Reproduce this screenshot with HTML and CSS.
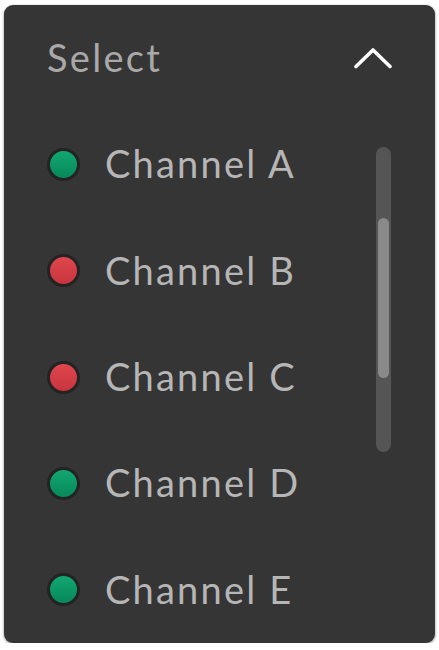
FILE: index.html
```html
<!DOCTYPE html>
<html>
<head>
<meta charset="utf-8">
<link rel="stylesheet" href="styles.css">
</head>
<body>
<div class="panel">
  <div class="header">
    <span class="title">Select</span>
    <svg class="chev" width="38" height="22" viewBox="0 0 38 22"><polyline points="2,19.5 19,3 36,19.5" fill="none" stroke="#ffffff" stroke-width="3.6" stroke-linecap="round" stroke-linejoin="round"/></svg>
  </div>
  <div class="row"><span class="dot green"></span><span class="label">Channel A</span></div>
  <div class="row"><span class="dot red"></span><span class="label">Channel B</span></div>
  <div class="row"><span class="dot red"></span><span class="label">Channel C</span></div>
  <div class="row"><span class="dot green"></span><span class="label">Channel D</span></div>
  <div class="row"><span class="dot green"></span><span class="label">Channel E</span></div>
  <div class="track"><div class="thumb"></div></div>
</div>
</body>
</html>
```
FILE: styles.css
```css
html, body {
  margin: 0;
  padding: 0;
  background: #ffffff;
}
.panel {
  position: relative;
  margin: 5px 0 0 4px;
  width: 431px;
  height: 638px;
  background: #353535;
  border-radius: 9px;
  box-shadow: 0 1px 3px rgba(0,0,0,0.45);
  display: flex;
  flex-direction: column;
  font-family: Lato, "Noto Sans", sans-serif;
}
.header, .row {
  flex: 1;
  display: flex;
  align-items: center;
}
.header {
  justify-content: space-between;
  padding: 0 43px 0 43px;
}
.title {
  color: #a9a9a9;
  font-size: 38px;
  letter-spacing: 2.3px;
  margin-top: -2px;
}
.chev {
  display: block;
}
.row {
  padding-left: 43px;
}
.dot {
  width: 27px;
  height: 27px;
  border-radius: 50%;
  border: 3px solid #232323;
  flex: none;
  margin-right: 25px;
}
.green {
  background: linear-gradient(#12a872, #07885a);
}
.red {
  background: linear-gradient(#e0474f, #c8343d);
}
.label {
  color: #b6b6b6;
  font-size: 38px;
  letter-spacing: 2.2px;
  margin-top: -2px;
}
.track {
  position: absolute;
  left: 372px;
  top: 142px;
  width: 15px;
  height: 305px;
  border-radius: 8px;
  background: #555555;
}
.thumb {
  margin: 71px 0 0 2px;
  width: 11px;
  height: 160px;
  border-radius: 6px;
  background: #8a8a8a;
}
```
